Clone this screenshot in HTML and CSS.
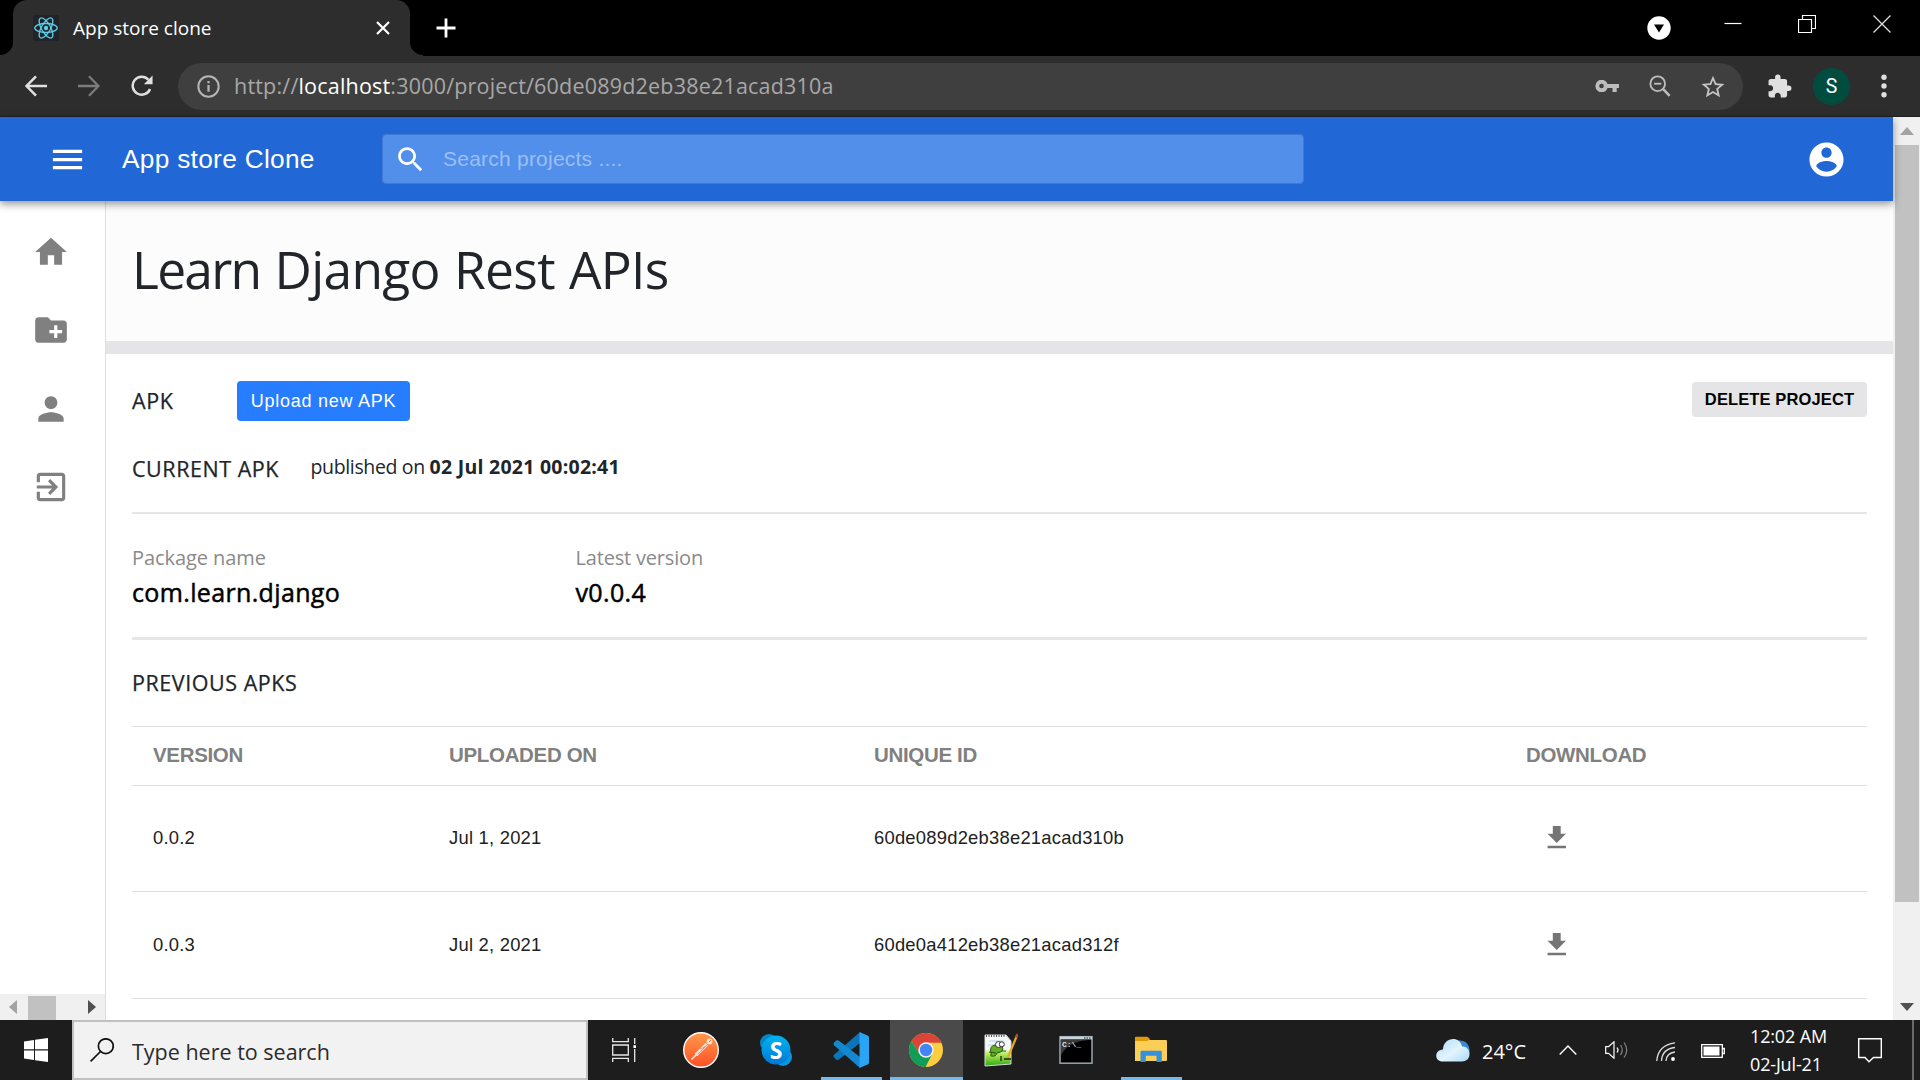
FILE: index.html
```html
<!DOCTYPE html>
<html lang="en">
<head>
<meta charset="utf-8">
<title>App store clone</title>
<link rel="stylesheet" href="styles.css">
</head>
<body>
<div class="screen">
  <div class="tabstrip">
    <div class="tab">
      <svg class="favicon" viewBox="0 0 26 26"><rect width="26" height="26" rx="2" fill="#20232a"/><g fill="none" stroke="#5ccfe6" stroke-width="1.3"><ellipse cx="13" cy="13" rx="11.3" ry="4.5"/><ellipse cx="13" cy="13" rx="11.3" ry="4.5" transform="rotate(60 13 13)"/><ellipse cx="13" cy="13" rx="11.3" ry="4.5" transform="rotate(120 13 13)"/></g><circle cx="13" cy="13" r="2.2" fill="#5ccfe6"/></svg>
      <span class="tab-title">App store clone</span>
      <svg class="tab-close" viewBox="0 0 14 14"><path d="M1 1L13 13M13 1L1 13" stroke="#fff" stroke-width="2.2"/></svg>
    </div>
    <svg class="new-tab" viewBox="0 0 20 20"><path d="M10 .5V19.5M.5 10H19.5" stroke="#fff" stroke-width="2.8"/></svg>
    <div class="window-buttons">
      <svg class="wb-down" viewBox="0 0 24 24"><circle cx="12" cy="12" r="11.7" fill="#fff"/><path d="M7 8.5H17L12 16.5Z" fill="#000"/></svg>
      <svg class="wb-min" viewBox="0 0 18 18"><path d="M.5 8.5H17.5" stroke="#fff" stroke-width="1.2"/></svg>
      <svg class="wb-max" viewBox="0 0 18 18"><path d="M.5 4.5H13.5V17.5H.5ZM4.5 4V.5H17.5V13.5H14" fill="none" stroke="#fff" stroke-width="1.2"/></svg>
      <svg class="wb-close" viewBox="0 0 18 18"><path d="M.5 .5L17.5 17.5M17.5 .5L.5 17.5" stroke="#ddd" stroke-width="1.3"/></svg>
    </div>
  </div>

  <div class="toolbar">
    <svg class="nav-icon" viewBox="0 0 22 22"><path d="M22 11H2M11 1.3L1.5 11L11 20.7" fill="none" stroke="#e0e0e0" stroke-width="2.5"/></svg>
    <svg class="nav-icon" viewBox="0 0 22 22"><path d="M0 11H20M11 1.3L20.5 11L11 20.7" fill="none" stroke="#7c7c7c" stroke-width="2.3"/></svg>
    <svg class="nav-icon reload" viewBox="0 0 24 24"><path d="M20.8 15.2A9.8 9.8 0 1 1 19 5.2" fill="none" stroke="#e0e0e0" stroke-width="2.7"/><path d="M23.5 .5V10H14Z" fill="#e0e0e0"/></svg>
    <div class="address">
      <svg class="info-icon" viewBox="0 0 24 24"><circle cx="12" cy="12" r="10.6" fill="none" stroke="#b5b5b5" stroke-width="2.1"/><path d="M12 10.5V17.5M12 6.3V8.7" stroke="#b5b5b5" stroke-width="2.3"/></svg>
      <span class="url">http://<span class="url-host">localhost</span>:3000/project/60de089d2eb38e21acad310a</span>
      <svg class="addr-key" viewBox="0 0 24 12"><path fill="#bdbdbd" fill-rule="evenodd" d="M12.6 4A6.3 6.3 0 1 0 12.6 8H17.5V12H21.7V8H24V4ZM6.5 3.7a2.3 2.3 0 1 1 0 4.6a2.3 2.3 0 1 1 0-4.6Z"/></svg>
      <svg class="addr-zoom" viewBox="0 0 24 24"><g fill="none" stroke="#bdbdbd" stroke-width="2"><circle cx="9.5" cy="9.5" r="8"/><path d="M5.5 9.5H13.5"/><path d="M15.5 15.5L22.5 22.8" stroke-width="2.8"/></g></svg>
      <svg class="addr-star" viewBox="1.5 1.5 21 20"><path fill="#c4c4c4" d="M22 9.24l-7.19-.62L12 2 9.19 8.63 2 9.24l5.46 4.73L5.82 21 12 17.27 18.18 21l-1.63-7.03L22 9.24zM12 15.4l-3.76 2.27 1-4.28-3.32-2.88 4.38-.38L12 6.1l1.71 4.04 4.38.38-3.32 2.88 1 4.28L12 15.4z"/></svg>
    </div>
    <svg class="puzzle" viewBox="1.5 0.5 22 22"><path fill="#e0e0e0" d="M20.5 11H19V7c0-1.1-.9-2-2-2h-4V3.500a2.500 2.500 0 0 0-5 0V5H4c-1.100 0-1.990.9-1.990 2v3.800H3.500c1.490 0 2.700 1.210 2.700 2.700s-1.210 2.700-2.700 2.700H2V20c0 1.100.9 2 2 2h3.800v-1.500c0-1.490 1.210-2.700 2.700-2.700 1.490 0 2.700 1.210 2.700 2.700V22H17c1.100 0 2-.9 2-2v-4h1.500a2.500 2.500 0 0 0 0-5z"/></svg>
    <div class="profile">S</div>
    <svg class="dots" viewBox="0 0 6 24"><g fill="#e0e0e0"><circle cx="3" cy="3.200" r="2.700"/><circle cx="3" cy="12" r="2.700"/><circle cx="3" cy="20.800" r="2.700"/></g></svg>
  </div>

  <div class="viewport">
    <div class="page">
      <header class="appbar">
        <svg class="menu-icon" viewBox="0 0 24 24"><path fill="#fff" d="M3 18h18v-2H3v2zm0-5h18v-2H3v2zm0-7v2h18V6H3z"/></svg>
        <span class="brand">App store Clone</span>
        <div class="search">
          <svg class="search-icon" viewBox="0 0 24 24"><path fill="#fff" d="M15.500 14h-.79l-.28-.27C15.410 12.590 16 11.110 16 9.500 16 5.910 13.090 3 9.500 3S3 5.910 3 9.500 5.910 16 9.500 16c1.610 0 3.090-.59 4.230-1.570l.27.28v.79l5 4.990L20.490 19l-4.990-5zm-6 0C7.010 14 5 11.990 5 9.500S7.010 5 9.500 5 14 7.010 14 9.500 11.990 14 9.500 14z"/></svg>
          <span class="placeholder">Search projects ....</span>
        </div>
        <svg class="account-icon" viewBox="0 0 24 24"><path fill="#fff" d="M12 2C6.480 2 2 6.480 2 12s4.480 10 10 10 10-4.480 10-10S17.520 2 12 2zm0 3c1.660 0 3 1.340 3 3s-1.340 3-3 3-3-1.340-3-3 1.340-3 3-3zm0 14.200c-2.500 0-4.710-1.280-6-3.220.03-1.990 4-3.080 6-3.080 1.990 0 5.970 1.090 6 3.080-1.290 1.940-3.500 3.220-6 3.220z"/></svg>
      </header>
      <div class="columns">
        <nav class="sidebar">
          <div class="side-icons">
            <svg viewBox="0 0 24 24"><path d="M10 20v-6h4v6h5v-8h3L12 3 2 12h3v8z"/></svg>
            <svg viewBox="0 0 24 24"><path d="M20 6h-8l-2-2H4c-1.110 0-1.990.89-1.990 2L2 18c0 1.110.89 2 2 2h16c1.110 0 2-.89 2-2V8c0-1.110-.89-2-2-2zm-1 8h-3v3h-2v-3h-3v-2h3V9h2v3h3v2z"/></svg>
            <svg viewBox="0 0 24 24"><path d="M12 12c2.210 0 4-1.790 4-4s-1.790-4-4-4-4 1.790-4 4 1.790 4 4 4zm0 2c-2.670 0-8 1.340-8 4v2h16v-2c0-2.660-5.330-4-8-4z"/></svg>
            <svg viewBox="0 0 24 24"><path d="M10.090 15.590L11.500 17l5-5-5-5-1.410 1.410L12.670 11H3v2h9.670l-2.580 2.590zM19 3H5c-1.110 0-2 .9-2 2v4h2V5h14v14H5v-4H3v4c0 1.100.89 2 2 2h14c1.100 0 2-.9 2-2V5c0-1.100-.9-2-2-2z"/></svg>
          </div>
          <div class="hscroll">
            <svg viewBox="0 0 8 14"><path fill="#a3a3a3" d="M8 0V14L0 7Z"/></svg>
            <div class="hthumb"></div>
            <svg viewBox="0 0 8 14"><path fill="#505050" d="M0 0V14L8 7Z"/></svg>
          </div>
        </nav>
        <main class="content">
          <section class="title-band"><h1><span class="lead-word">Learn</span> Django Rest APIs</h1></section>
          <section class="details">
            <div class="apk-row">
              <span class="label apk">APK</span>
              <button class="upload">Upload new APK</button>
              <button class="delete">DELETE PROJECT</button>
            </div>
            <div class="current-row">
              <span class="label current">CURRENT APK</span>
              <span class="published">published on <b>02 Jul 2021 00:02:41</b></span>
            </div>
            <div class="facts">
              <div class="fact package"><span class="fact-label">Package name</span><span class="fact-value">com.learn.django</span></div>
              <div class="fact version"><span class="fact-label">Latest version</span><span class="fact-value">v0.0.4</span></div>
            </div>
            <h2 class="label previous">PREVIOUS APKS</h2>
            <table class="apks">
              <colgroup><col class="c1"><col class="c2"><col class="c3"><col class="c4"></colgroup>
              <thead><tr><th>VERSION</th><th>UPLOADED ON</th><th>UNIQUE ID</th><th>DOWNLOAD</th></tr></thead>
              <tbody>
                <tr><td>0.0.2</td><td>Jul 1, 2021</td><td>60de089d2eb38e21acad310b</td><td><svg class="dl" viewBox="0 0 24 24"><path d="M19 9h-4V3H9v6H5l7 7 7-7zM5 18v2h14v-2H5z"/></svg></td></tr>
                <tr><td>0.0.3</td><td>Jul 2, 2021</td><td>60de0a412eb38e21acad312f</td><td><svg class="dl" viewBox="0 0 24 24"><path d="M19 9h-4V3H9v6H5l7 7 7-7zM5 18v2h14v-2H5z"/></svg></td></tr>
              </tbody>
            </table>
          </section>
        </main>
      </div>
    </div>
    <div class="vscroll">
      <svg viewBox="0 0 14 8"><path fill="#a3a3a3" d="M0 8H14L7 0Z"/></svg>
      <div class="vthumb"></div>
      <svg viewBox="0 0 14 8"><path fill="#505050" d="M0 0H14L7 8Z"/></svg>
    </div>
  </div>

  <div class="taskbar">
    <div class="start"><svg viewBox="0 0 24 24"><path fill="#fff" d="M0 3.500L10 2V11.300H0ZM11 1.800L24 0V11.300H11ZM0 12.400H10V22L0 20.600ZM11 12.400H24V24L11 22.200Z"/></svg></div>
    <div class="tsearch">
      <svg viewBox="0 0 24 24"><g fill="none" stroke="#111" stroke-width="1.700"><circle cx="15.800" cy="8.200" r="7.400"/><path d="M10.500 13.500L.6 23.400"/></g></svg>
      <span>Type here to search</span>
    </div>
    <div class="apps">
      <div class="app taskview"><svg class="i24" viewBox="0 0 24 24"><g fill="none" stroke="#e8e8e8" stroke-width="1.300"><path d="M.7 0V3.600H16.300V0M.7 24V20.400H16.300V24M.7 7H16.300V17H.7ZM22.700 0V6M22.700 11V24"/></g><rect x="21.400" y="7.200" width="2.600" height="2.800" fill="#fff"/></svg></div>
      <div class="app"><svg class="i36" viewBox="0 0 36 36"><defs><linearGradient id="pm" x2="0" y2="1"><stop stop-color="#ff9a4b"/><stop offset="1" stop-color="#ff4f26"/></linearGradient></defs><circle cx="18" cy="18" r="17.300" fill="url(#pm)" stroke="#fff" stroke-width="1.400"/><path d="M8.500 27.500L18 18" stroke="#ffe3d6" stroke-width="1.600"/><path d="M13 23L24 12" stroke="#ffe3d6" stroke-width="3.600"/><path d="M14.500 22.500L25 12M17 17L22 15" stroke="#ff6e37" stroke-width=".8"/><circle cx="26.500" cy="9.500" r="2.900" fill="#ffe3d6"/><path d="M26 10l2-2" stroke="#ff6e37"/></svg></div>
      <div class="app"><svg class="i34" viewBox="0 0 34 34"><defs><linearGradient id="sk" x2="0" y2="1"><stop stop-color="#00b4ef"/><stop offset="1" stop-color="#0078d7"/></linearGradient></defs><circle cx="10" cy="10" r="9" fill="#0687c8"/><circle cx="24" cy="24" r="9" fill="#0b96dc"/><circle cx="17" cy="17" r="14.500" fill="url(#sk)"/><text x="17" y="25.500" text-anchor="middle" class="skype-s">S</text></svg></div>
      <div class="app active"><svg class="i36" viewBox="0 0 36 36"><path fill="#0c74b8" d="M27 0V11L6 27.500Q4 28.500 2.500 27L.7 25Q0 24 1 22.800Z"/><path fill="#1587cf" d="M27 36V25L6 8.800Q4 7.800 2.500 9L.7 11Q0 12.200 1 13.300Z"/><path fill="#2aa4f4" d="M26.500 0L35 3.800Q36 4.300 36 5.500V30.500Q36 31.700 35 32.200L26.500 36Z"/></svg></div>
      <div class="app current-app"><svg class="i34" viewBox="-17 -17 34 34"><circle r="17" fill="#ffcd40"/><path fill="#db4437" d="M-14.500 -8.900A17 17 0 0 1 15.400 -7.200L0 -7.200L-6.500 3.800Z"/><path fill="#0f9d58" d="M-14.500 -8.900A17 17 0 0 0 -.5 17L6.500 3.600L-6.500 3.800Z"/><circle r="7.700" fill="#f1f1f1"/><circle r="6.200" fill="#4285f4"/></svg></div>
      <div class="app"><svg class="i34" viewBox="0 0 34 34"><defs><linearGradient id="np" x2="0" y2="1"><stop offset=".45" stop-color="#f4f8fa"/><stop offset=".6" stop-color="#b9ef5a"/><stop offset="1" stop-color="#2fa614"/></linearGradient></defs><path d="M1 2H22L27 8V31L1 33Z" fill="url(#np)" stroke="#d5d9dc"/><path d="M2 3H22" stroke="#555" stroke-width="2" stroke-dasharray="1 1.500"/><path d="M5 8H20M4 12H14" stroke="#b9d2e2"/><path d="M7 20Q5 13 11 12L18 13Q21 19 13 20Q12 24 7 23L7 20M12 20L5 19M18 18L22 18" fill="#63ad24" stroke="#265c16"/><circle cx="14.500" cy="11.500" r="3" fill="#fff" stroke="#333"/><circle cx="17.800" cy="11.300" r="2.500" fill="#fff" stroke="#333"/><path d="M17 23V28M20 26L27 26" stroke="#222" stroke-width="1.300"/><path d="M24 24L33 2.500" stroke="#e8a820" stroke-width="2.200"/><path d="M32 4.500L33.500 1" stroke="#b0433c" stroke-width="2.400"/></svg></div>
      <div class="app"><svg class="i34" viewBox="0 0 34 34"><rect x="1" y="3.700" width="32" height="26.500" fill="#000" stroke="#9aa6ad" stroke-width="1.500"/><path d="M2 7V22Q10 8 30 7Z" fill="#3a3a3a"/><path d="M1 5H33" stroke="#c8d3da" stroke-width="2.800"/><path d="M25 5H32" stroke="#445868" stroke-width="1.500" stroke-dasharray="1.500 1"/><text x="3" y="14" class="cmd-text">C:\_</text></svg></div>
      <div class="app active"><svg class="i34" viewBox="0 0 34 34"><path d="M1 5Q1 4 2 4H13L16 7H32Q33 7 33 8V27Q33 28 32 28H1Z" fill="#fbce55"/><path d="M1 8V5Q1 3.700 2.300 3.700H13.500L16 6L13.500 8Z" fill="#e09a07"/><path d="M6.500 29V19Q6.500 17.700 7.800 17.700H26.500Q27.800 17.700 27.800 19V29H22.500V22.800H11.800V29Z" fill="#3591dc"/></svg></div>
    </div>
    <div class="tray">
      <svg class="cloud" viewBox="0 0 34 24"><defs><linearGradient id="cl" x2="1" y2="1"><stop stop-color="#a9dcf8"/><stop offset=".55" stop-color="#e3f4fd"/><stop offset="1" stop-color="#a7d9f7"/></linearGradient></defs><path fill="#3b8ad8" d="M20 3Q30 1 33 9Q35 16 30 20L20 12Z"/><path fill="url(#cl)" d="M7 23.500C-2 23.500-2 12 7 11.500C7-1 24-3 26 8.500C35 7 37 23.500 26 23.500Z"/></svg>
      <span class="temp">24°C</span>
      <svg class="chev" viewBox="0 0 18 10"><path d="M.7 9.500L9 1L17.300 9.500" fill="none" stroke="#fff" stroke-width="1.400"/></svg>
      <svg class="spk" viewBox="0 0 23 18"><g fill="none" stroke="#fff" stroke-width="1.200"><path d="M.7 5.700H3.500L9 .8V17.200L3.500 12.300H.7Z"/><path d="M12 6.500Q14 9 12 11.500"/><path d="M15.500 4Q19 9 15.500 14M19 1.500Q24.500 9 19 16.500" stroke="#858585"/></g></svg>
      <svg class="wifi" viewBox="0 0 19 19"><g fill="none" stroke="#ddd" stroke-width="1.300"><path d="M.7 19Q2 3 19 .8M5.500 19Q6 7 19 5.500M10 19Q10.500 11 19 10"/></g><circle cx="17" cy="17" r="1.900" fill="#fff"/></svg>
      <svg class="batt" viewBox="0 0 24 14"><path d="M.7 .7H21.300V13.300H.7ZM21.800 4.500H23.300V9.500H21.800" fill="none" stroke="#fff" stroke-width="1.300"/><rect x="2.500" y="2.500" width="16" height="9" fill="#fff"/></svg>
      <div class="clock"><span class="time">12:02 AM</span><span class="date">02-Jul-21</span></div>
      <svg class="notif" viewBox="0 0 24 25"><path d="M.7 .7H23.300V19.500H15.500L11 23.800L7 19.500H.7Z" fill="none" stroke="#fff" stroke-width="1.400"/></svg>
      <div class="show-desktop"></div>
    </div>
  </div>
</div>
</body>
</html>
```
FILE: styles.css
```css
* { box-sizing: border-box; }
body { margin: 0; font-family: "Open Sans", "Noto Sans", sans-serif; background: #fff; }
svg { display: block; flex: none; }
.screen { width: 1920px; height: 1080px; display: flex; flex-direction: column; overflow: hidden; white-space: nowrap; }

/* Browser tab strip */
.tabstrip { height: 56px; flex: none; background: #000; display: flex; padding-left: 13px; }
.tab { width: 397px; height: 56px; position: relative; background: #2d2d2d; border-radius: 14px 14px 0 0; display: flex; align-items: center; padding: 0 20px 0 20px; }
.tab::before, .tab::after { content: ""; position: absolute; bottom: 0; width: 13px; height: 14px; }
.tab::before { left: -13px; background: radial-gradient(circle at 0 0, #000 12.500px, #2d2d2d 13.500px); }
.tab::after { right: -13px; background: radial-gradient(circle at 100% 0, #000 12.500px, #2d2d2d 13.500px); }
.favicon { width: 26px; height: 26px; }
.tab-title { flex: 1; margin-left: 14px; font-size: 19px; color: #fff; }
.tab-close { width: 14px; height: 14px; }
.new-tab { width: 20px; height: 20px; margin: 18px 0 0 25.500px; }
.window-buttons { display: flex; align-items: flex-start; margin-left: auto; padding: 15px 29px 0 0; }
.wb-down { width: 24px; height: 24px; margin: 1px 53px 0 0; }
.wb-min { width: 18px; height: 18px; margin: 0 56px 0 0; }
.wb-max { width: 18px; height: 18px; margin-right: 57.500px; }
.wb-close { width: 18px; height: 18px; }

/* Browser toolbar */
.toolbar { height: 61px; flex: none; background: #2d2d2d; border-bottom: 1px solid #202020; display: flex; align-items: center; padding: 0 32px 0 25px; }
.nav-icon { width: 22px; height: 22px; margin-right: 31px; }
.reload { margin-right: 25px; }
.address { height: 47px; width: 1565px; flex: none; background: #3f3f3f; border-radius: 24px; display: flex; align-items: center; padding: 0 18px 0 19px; }
.info-icon { width: 23px; height: 23px; }
.url { flex: 1; margin-left: 14px; padding-bottom: 2px; font-size: 21.500px; letter-spacing: .2px; color: #a8a8a8; }
.url-host { color: #fff; }
.addr-key { width: 24px; height: 12px; margin-right: 30px; }
.addr-zoom { width: 22px; height: 22px; margin-right: 30px; }
.addr-star { width: 24px; height: 23px; }
.puzzle { width: 24px; height: 24px; margin-left: 25px; }
.profile { width: 37px; height: 37px; margin-left: 21px; border-radius: 50%; background: #004d40; color: #fff; font: 19.500px/37px Roboto, sans-serif; text-align: center; }
.dots { width: 6px; height: 24px; margin-left: 31px; }

/* Page area */
.viewport { height: 903px; flex: none; display: flex; }
.page { width: 1893px; display: flex; flex-direction: column; }
.appbar { height: 84px; flex: none; position: relative; z-index: 1; background: #2167d5; box-shadow: 0 3px 8px rgba(0,0,0,.42); display: flex; align-items: center; padding: 0 46.500px 0 48px; font-family: "Liberation Sans", Arial, sans-serif; }
.menu-icon { width: 39px; height: 39px; }
.brand { width: 260px; margin-left: 35px; font-size: 26.250px; letter-spacing: .3px; color: #fff; }
.search { width: 922px; height: 50px; background: #528fea; border: 1px solid #4079d2; border-radius: 4px; display: flex; align-items: center; padding-left: 11px; }
.search-icon { width: 33px; height: 33px; }
.placeholder { margin-left: 16px; font-size: 21px; letter-spacing: .23px; color: #9bbff4; }
.account-icon { width: 41px; height: 41px; margin-left: auto; }
.columns { flex: 1; display: flex; min-height: 0; }

.sidebar { width: 106px; flex: none; border-right: 1px solid #dedede; display: flex; flex-direction: column; justify-content: space-between; }
.side-icons { display: flex; flex-direction: column; align-items: center; gap: 40.300px; padding: 32px 2.500px 0 0; fill: #808080; }
.side-icons svg { width: 38px; height: 38px; }
.hscroll { height: 26px; background: #f0f0f0; display: flex; align-items: center; padding: 0 9px 0 9px; }
.hscroll svg { width: 8px; height: 14px; }
.hthumb { width: 28px; height: 24px; margin: 2px auto 0 11px; background: #c1c1c1; }

.content { flex: 1; color: #212529; display: flex; flex-direction: column; overflow: hidden; }
.title-band { height: 153px; flex: none; background: #fcfcfc; border-bottom: 13px solid #e5e5e7; padding: 32.500px 26px 0; }
.title-band h1 { margin: 0; font-size: 51.500px; line-height: 70px; font-weight: 400; letter-spacing: -.7px; word-spacing: 1.500px; }
.lead-word { letter-spacing: -1.750px; }
.details { padding: 27px 26px 0 26px; }
.apk-row { height: 40px; display: flex; align-items: center; }
.label { font-size: 21.500px; line-height: 30px; font-weight: 400; letter-spacing: .55px; -webkit-text-stroke: .25px currentColor; }
.apk { width: 105px; }
button { border: 0; border-radius: 4px; padding: 0; font-family: "Liberation Sans", Arial, sans-serif; }
.upload { width: 173px; height: 40px; background: #267dff; color: #fff; font-size: 18px; letter-spacing: .75px; }
.delete { width: 175px; height: 35px; margin-left: auto; background: #e5e5e7; color: #000; font-size: 16.500px; font-weight: 700; letter-spacing: .12px; margin-bottom: 3px; }
.current-row { height: 93px; display: flex; align-items: flex-start; padding-top: 31px; border-bottom: 2px solid #e6e6e6; }
.current { width: 178.500px; padding-top: 2px; }
.published { font-size: 19.500px; line-height: 30px; letter-spacing: -.35px; }
.published b { font-weight: 700; letter-spacing: .25px; }
.facts { height: 126px; display: flex; border-bottom: 3px solid #e6e6e6; padding-top: 29px; }
.fact { display: flex; flex-direction: column; }
.package { width: 443.500px; }
.fact-label { font-size: 20px; line-height: 30px; letter-spacing: -.08px; color: #8a8a8a; }
.version .fact-label { letter-spacing: -.18px; }
.fact-value { margin-top: 1px; font-size: 25px; line-height: 36px; letter-spacing: .35px; color: #000; -webkit-text-stroke: .5px currentColor; }
.previous { margin: 28px 0 0; }
.apks { width: 100%; margin-top: 28px; border-collapse: separate; border-spacing: 0; table-layout: fixed; font-family: "Liberation Sans", Arial, sans-serif; border-top: 1px solid #dedede; }
.c1 { width: 296px; } .c2 { width: 425px; } .c3 { width: 652px; }
.apks th, .apks td { text-align: left; padding: 0 0 2px 21px; border-bottom: 1px solid #dedede; }
.apks th { height: 59px; font-size: 20.500px; letter-spacing: -.33px; color: #808080; }
.apks td { height: 106px; padding-bottom: 1px; font-size: 18.400px; letter-spacing: .23px; color: #212121; }
.apks tr:last-child td { height: 107px; }
.dl { width: 31.500px; height: 31.500px; margin-left: 15px; fill: #757575; }

.vscroll { width: 27px; background: #f0f0f0; display: flex; flex-direction: column; align-items: center; padding: 10px 0 9px; }
.vscroll svg { width: 14px; height: 8px; }
.vthumb { width: 24px; height: 757px; margin: 10px 0 auto 1px; background: #c1c1c1; }

/* Taskbar */
.taskbar { height: 60px; flex: none; background: #1d1d1d; display: flex; }
.start { width: 72px; display: flex; align-items: center; padding-left: 24px; }
.start svg { width: 24px; height: 24px; }
.tsearch { width: 516px; background: #f2f2f2; border: 2px solid #c0c0c0; display: flex; align-items: center; padding-left: 16px; }
.tsearch svg { width: 24px; height: 24px; }
.tsearch span { margin-left: 18px; padding-top: 3px; font-size: 21.500px; color: #2b2b2b; }
.apps { display: flex; }
.app { width: 75px; height: 60px; display: flex; align-items: center; justify-content: center; padding-right: 2px; }
.taskview { width: 76px; padding-right: 4px; }
.i24 { width: 24px; height: 24px; } .i34 { width: 34px; height: 34px; } .i36 { width: 36px; height: 36px; }
.active { background: linear-gradient(#76b9ed, #76b9ed) center bottom / 61px 3px no-repeat; }
.current-app { width: 73px; margin: 0 1px; background: #4a4a4a; border-bottom: 3px solid #76b9ed; padding-top: 3px; }
.skype-s { font: 700 23px "Open Sans", sans-serif; fill: #fff; }
.cmd-text { font: 700 8px "Liberation Mono", monospace; fill: #ddd; }
.tray { margin-left: auto; display: flex; align-items: center; color: #fff; }
.cloud { width: 34px; height: 24px; margin-right: 12px; }
.temp { width: 77px; font-size: 20px; padding-top: 2px; }
.chev { width: 18px; height: 10px; margin-right: 28px; }
.spk { width: 23px; height: 18px; margin-right: 28px; }
.wifi { width: 19px; height: 19px; margin: 2px 26px 0 0; }
.batt { width: 24px; height: 14px; margin: 2px 25px 0 0; }
.clock { width: 108px; display: flex; flex-direction: column; font-size: 18px; line-height: 28px; letter-spacing: -.15px; }
.notif { width: 24px; height: 25px; margin-right: 30px; }
.show-desktop { width: 8px; height: 60px; border-left: 2px solid #6a6a6a; }
```
